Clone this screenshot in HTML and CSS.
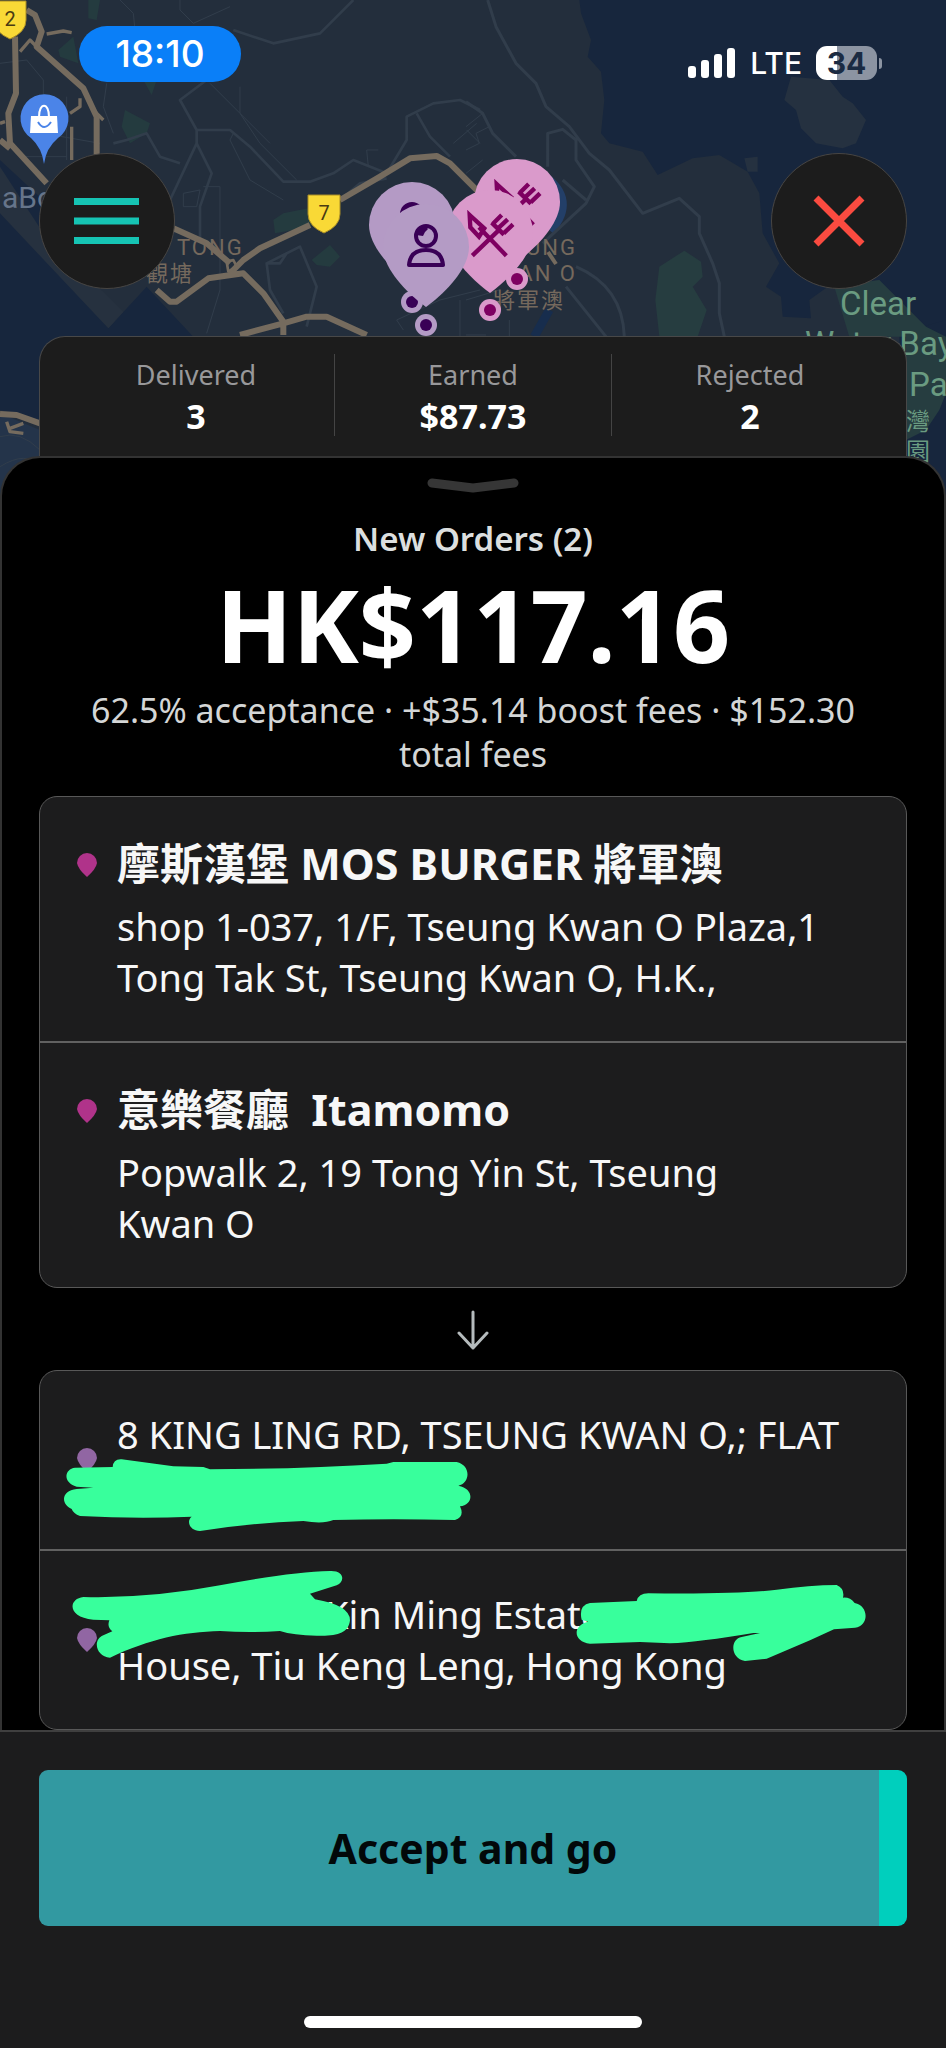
FILE: index.html
```html
<!DOCTYPE html>
<html lang="en">
<head>
<meta charset="utf-8">
<meta name="viewport" content="width=device-width, initial-scale=1">
<title>New Orders</title>
<link rel="stylesheet" href="styles.css">
</head>
<body>
<div class="screen">
  <svg class="map" viewBox="0 0 946 520" role="img" aria-label="Map">
    <rect width="946" height="520" fill="#232e3c"/>
    <!-- water -->
    <g transform="scale(.33333)" fill="#17263d">
      <path d="M0 480 140 610 205 840 325 985 440 860 580 1010V1240L120 1260 0 1230Z"/>
      <path d="M0 640 325 985 370 935 130 700 0 500Z" fill="#26313f"/>
      <path d="M0 1240 120 1290V1400L0 1560Z" fill="#24344a"/>
    </g>
    <g transform="translate(466 0) scale(.33333)">
      <path fill="#17263d" d="M340 0 345 40 375 120 365 170 405 215 415 300 405 400 430 430 530 455 575 525 680 475 760 465 845 515 880 580 890 700 940 790 900 860 945 890 950 950 1035 955 1030 900 1100 850 1240 840 1340 960 1440 1010V0Z"/>
      <path fill="#17263d" d="M1300 1000 1440 960V1560H1300Z"/>
      <path fill="#253140" d="M975 230 1090 240 1130 290 1160 310 1200 360 1170 430 1130 445 1050 430 1005 385 990 330 955 300Z M835 475 875 470V515H845Z"/>
      <path fill="#263d40" d="M580 800 655 752 705 785 710 830 680 860 722 930 695 1010H580L568 900Z M1105 860 1240 840 1380 980 1440 1010V1180L1420 1230 1380 1290 1320 1320V1010H1150Z"/>
      <path fill="none" stroke="#172d4d" stroke-width="26" d="M205 1010 250 930"/>
      <path fill="none" stroke="#233f68" stroke-width="34" d="M230 530Q330 600 250 690"/>
    </g>
    <!-- parks -->
    <g transform="scale(.33333)" fill="#243b3f">
      <path d="M265 0H300L290 60 265 55Z M175 150 220 110 235 190 180 170Z M375 330 450 370 440 400 390 430 365 380Z M430 240H470L455 285Z M850 640 925 625 935 680 825 700 820 660Z M935 780 990 735 1020 770 990 800 950 795Z"/>
    </g>
    <!-- minor roads -->
    <g transform="scale(.33333)" fill="none" stroke="#313d4b" stroke-width="8" stroke-linejoin="round">
      <path d="M700 90 820 130 960 100 1060 0M340 430 380 420 440 400 480 470 540 490M520 700 510 600 590 430V390L540 300 620 240M590 390 690 390 750 440 850 545 930 545 1000 520 1060 480 1160 520 1220 420V350L1300 310 1380 300 1440 330M1250 340 1290 410 1350 470M590 430 635 520 600 620V720M800 790 900 740 950 860 920 980M860 760 840 790 800 790 810 870 850 940M1160 535 1080 550 1020 600"/>
      <g stroke-width="3"><path d="M610 560H660V870L620 1000M320 250 310 320 340 400M0 190 80 180 130 240V400L300 430M60 470H200M360 0 400 40 410 140M540 0V30L580 70 690 20M630 250 720 340 810 430M720 260V340L780 430 890 540M700 400 690 420 750 540 850 600M1190 960 1210 990M1380 900V1010M1190 960 1320 900 1440 870M1360 430 1430 370M1105 500 1100 450 1135 450M190 620 160 640 200 700M1400 390 1440 430M200 290V480M0 1310Q60 1290 120 1350M0 1400Q80 1350 120 1400M550 580 600 570 590 620 550 620Z"/></g>
    </g>
    <g transform="translate(466 0) scale(.33333)" fill="none" stroke="#313d4b" stroke-width="9" stroke-linejoin="round">
      <path d="M65 0 90 80 150 190 210 250 240 320 310 380 370 460 430 510 530 640 640 595 700 650V700L740 790 760 850V940L775 1010M245 500V400L290 388 330 420 330 480 385 560 360 610 230 730M290 540 360 600M0 305 50 340 80 400 150 470M300 860 420 1010M330 800Q470 860 475 1010"/>
      <path stroke-width="3" d="M0 380 50 340M0 450 40 430 30 400 70 380M0 520 50 480M0 900 100 870M0 1005H60M130 960V1010"/>
    </g>
    <!-- highways -->
    <g transform="scale(.33333)" fill="none" stroke="#756b5e" stroke-width="18" stroke-linejoin="round">
      <path d="M45 110 48 280 25 340 30 430 140 550M0 420 30 445M80 30 105 45 125 95 110 140 250 265 290 350V470M520 685 620 730 690 790M470 870 510 905H530L625 835 730 820 790 880 850 965 850 1005M720 1005 850 970M690 820 730 780 780 745 930 675M1020 600 1140 530 1230 475 1310 468 1350 490 1440 580M850 970 920 950 980 950 1100 1005M0 1242 50 1245 120 1270"/>
      <path stroke-width="10" d="M140 102 190 93 215 98M60 155 90 120 130 160M210 340 240 320 240 295M215 380V480M280 330 310 360M20 1265 30 1295 70 1300M30 1285 70 1270M0 370 15 365"/>
      <path d="M680 785 700 780 710 800 685 815Z" stroke-width="8"/>
    </g>
    <path d="M548 252 556 264" stroke="#756b5e" stroke-width="4"/>
    <!-- place names -->
    <g class="places">
      <text x="2" y="208" font-size="30" fill="#66758a">aBo</text>
      <text x="177" y="255" font-size="22" letter-spacing="2">TONG</text>
      <text x="146" y="281" font-size="22" letter-spacing="2">觀塘</text>
      <text x="577" y="255" text-anchor="end" font-size="22" letter-spacing="2">TSEUNG</text>
      <text x="577" y="281" text-anchor="end" font-size="22" letter-spacing="2">KWAN O</text>
      <text x="493" y="308" font-size="22" letter-spacing="2">將軍澳</text>
      <g fill="#6a9b81" font-size="33">
        <text x="840" y="315">Clear</text>
        <text x="805" y="355">Water Bay</text>
        <text x="909" y="396">Park</text>
        <text x="906" y="430" text-anchor="start" font-size="24">灣</text>
        <text x="906" y="460" font-size="24">園</text>
      </g>
    </g>
    <!-- route shields -->
    <g stroke="#a98c26" stroke-width="1" fill="#f9d936">
      <path d="M-6 1H26V20Q26 32 10 39Q-6 32-6 20Z"/>
      <path d="M308 195H340V214Q340 226 324 233Q308 226 308 214Z"/>
    </g>
    <g class="shield-text"><text x="10" y="26">2</text><text x="324" y="220">7</text></g>
    <!-- shopping marker -->
    <path fill="#4b84e8" d="M44 164Q42 148 31 138A24 24 0 1 1 58 138Q46 148 44 164Z"/>
    <path fill="#fff" d="M31 116H57L58 133H30Z"/>
    <path fill="none" stroke="#fff" stroke-width="2" d="M39 117C39 102 49 102 49 117"/>
    <path fill="none" stroke="#4b84e8" stroke-width="2" d="M38 122Q44 132 51 122"/>
    <!-- order pins -->
    <defs>
      <path id="drop" d="M-43 0A43 43 0 0 1 43 0C43 22 19 46 0 60C-19 46-43 22-43 0Z"/>
      <g id="utensils" transform="translate(-151 -93) scale(.33333)" fill="none" stroke="#7e0061" stroke-width="13">
        <path d="M400 347 478 272M502 347 420 262M392 225 436 265 420 290 394 262ZM461 252 488 225M477 265 506 238M494 280 522 253M458 248 495 284"/>
      </g>
      <g id="person" fill="none" stroke="#390056" stroke-width="4">
        <circle cy="-11" r="10"/>
        <path stroke-linejoin="round" d="M-17 18C-16 7-9 3 0 3S16 7 17 18Z"/>
        <path fill="#390056" stroke="none" d="M-10-12-8-18 0-20 2-18-1-15-3-11Z"/>
      </g>
    </defs>
    <g transform="translate(517 202)" fill="#da9acb"><use href="#drop"/><use href="#utensils"/><circle cy="77" r="11"/><circle cy="77" r="6" fill="#7e0061"/></g>
    <g transform="translate(490 233)" fill="#da9acb"><use href="#drop"/><use href="#utensils"/><circle cy="77" r="11"/><circle cy="77" r="6" fill="#7e0061"/></g>
    <g transform="translate(412 225)" fill="#b49ac5"><use href="#drop"/><use href="#person"/><circle cy="77" r="11"/><circle cy="77" r="6" fill="#390056"/></g>
    <g transform="translate(426 247)" fill="#b49bc5"><use href="#drop"/><use href="#person"/><circle cy="78" r="11"/><circle cy="78" r="6" fill="#390056"/></g>
  </svg>

  <header class="top">
    <div class="status">
      <time class="clock">18:10</time>
      <div class="signals">
        <svg width="48" height="32" viewBox="0 0 48 32" fill="#fff" aria-hidden="true"><rect y="19" width="8" height="12" rx="3"/><rect x="13" y="13" width="8" height="18" rx="3"/><rect x="26" y="7" width="8" height="24" rx="3"/><rect x="39" y="1" width="8" height="30" rx="3"/></svg>
        <span>LTE</span>
        <span class="battery">34</span>
      </div>
    </div>
    <div class="controls">
      <button class="round" aria-label="Menu"><svg width="66" height="48" viewBox="0 0 66 48" fill="#16c4b4"><path d="M0 1H65V8H0ZM0 20.500H65V27.500H0ZM0 40H65V47H0Z"/></svg></button>
      <button class="round" aria-label="Close"><svg width="52" height="52" viewBox="0 0 52 52" stroke="#fa4b40" stroke-width="7"><path d="M3 3 49 49M49 3 3 49"/></svg></button>
    </div>
    <dl class="stats">
      <div><dt>Delivered</dt><dd>3</dd></div>
      <div><dt>Earned</dt><dd>$87.73</dd></div>
      <div><dt>Rejected</dt><dd>2</dd></div>
    </dl>
  </header>

  <main class="sheet">
    <svg class="handle" width="92" height="16" viewBox="0 0 92 16" fill="none" stroke="#363636" stroke-width="9" stroke-linecap="round" stroke-linejoin="round" aria-hidden="true"><path d="M5 5 46 10 87 5"/></svg>
    <h1>New Orders (2)</h1>
    <p class="amount">HK$117.16</p>
    <p class="fees">62.5% acceptance · +$35.14 boost fees · $152.30 total fees</p>

    <ul class="card">
      <li class="stop pickup">
        <svg class="pin" viewBox="0 0 20 24" fill="#b0338a"><path d="M0 10A10 10 0 0 1 20 10Q19 16 10 24Q1 16 0 10Z"/></svg>
        <div><h2>摩斯漢堡 MOS BURGER 將軍澳</h2><p>shop 1-037, 1/F, Tseung Kwan O Plaza,1 Tong Tak St, Tseung Kwan O, H.K.,</p></div>
      </li>
      <li class="stop pickup">
        <svg class="pin" viewBox="0 0 20 24" fill="#b0338a"><path d="M0 10A10 10 0 0 1 20 10Q19 16 10 24Q1 16 0 10Z"/></svg>
        <div><h2>意樂餐廳&nbsp; Itamomo</h2><p>Popwalk 2, 19 Tong Yin St, Tseung<br>Kwan O</p></div>
      </li>
    </ul>

    <svg class="arrow" width="32" height="40" viewBox="0 0 32 40" fill="none" stroke="#b5bbbd" stroke-width="3" stroke-linecap="round" stroke-linejoin="round" aria-hidden="true"><path d="M16 2V38M2 23 16 38 30 23"/></svg>

    <ul class="card">
      <li class="stop dropoff">
        <svg class="pin" viewBox="0 0 20 24" fill="#9166a3"><path d="M0 10A10 10 0 0 1 20 10Q19 16 10 24Q1 16 0 10Z"/></svg>
        <p>8 KING LING RD, TSEUNG KWAN O,; FLAT<br>&nbsp;</p>
        <svg class="scribble" viewBox="40 1374 866 179" aria-hidden="true"><path transform="translate(50 1440) scale(.33333)" d="M188 90Q190 65 215 67L370 88 460 90 480 97Q750 96 1010 80L1030 75H1220C1265 85 1260 140 1225 146C1275 155 1270 205 1230 208Q1245 240 1215 249 1030 244 850 249 820 262 760 252 600 258 450 282C415 280 410 250 425 239Q260 246 90 237 70 230 65 216C30 200 35 160 80 156L130 152 80 149C35 135 45 95 75 92Z"/></svg>
      </li>
      <li class="stop dropoff">
        <svg class="pin" viewBox="0 0 20 24" fill="#9166a3"><path d="M0 10A10 10 0 0 1 20 10Q19 16 10 24Q1 16 0 10Z"/></svg>
        <p><span class="redacted">Kin Ming Estate</span><br>House, Tiu Keng Leng, Hong Kong</p>
        <svg class="scribble" viewBox="40 1554 866 179" aria-hidden="true"><path transform="translate(50 1440) scale(.33333)" d="M100 480Q300 485 510 445T840 402C885 400 885 435 860 445L780 470 795 487Q900 505 900 550C895 590 860 598 800 596Q730 595 690 582 600 588 510 582C400 585 300 605 180 662C140 660 125 610 160 595L187 583Q170 570 178 550L130 548C50 540 55 485 100 480Z"/><path transform="translate(560 1570) scale(.33333)" d="M90 108 230 102Q235 80 265 79 550 82 650 68T830 54Q855 65 849 92 870 90 884 108C925 115 930 175 885 182L822 187 750 220 620 275 555 282C510 275 510 215 545 210L600 198 580 198Q420 225 330 229L240 225 90 230C40 225 35 175 85 164L65 158Q55 115 90 108Z"/></svg>
      </li>
    </ul>
  </main>

  <footer class="bottom">
    <button class="accept">Accept and go</button>
    <div class="home"></div>
  </footer>
</div>
</body>
</html>
```
FILE: styles.css
```css
* { box-sizing: border-box; }

body {
  margin: 0;
  background: #1c1c1d;
  color: #f7f7f7;
  font-family: "Noto Sans", "Noto Sans CJK TC", sans-serif;
}

h1, h2, p, dl, dd, ul { margin: 0; padding: 0; }
ul { list-style: none; }
button { border: 0; padding: 0; font: inherit; cursor: pointer; }

.screen {
  position: relative;
  display: flex;
  flex-direction: column;
  min-height: 100vh;
  overflow: hidden;
}

.map {
  position: absolute;
  top: 0;
  left: 0;
  width: 100%;
}

.places { fill: #75695d; font-family: Roboto, "Noto Sans CJK TC", sans-serif; }
.shield-text { fill: #4a3b12; font: 20px Roboto, sans-serif; text-anchor: middle; }

.top { position: relative; padding: 26px 39px 0; }

.status {
  display: flex;
  justify-content: space-between;
  align-items: flex-start;
  padding: 0 30px 0 40px;
  font-family: Inter, sans-serif;
}

.clock {
  width: 162px;
  border-radius: 28px;
  background: #0a7ff8;
  color: #fff;
  font-size: 37px;
  font-weight: 500;
  line-height: 56px;
  text-align: center;
}

.signals {
  display: flex;
  align-items: center;
  gap: 14px;
  padding-top: 18px;
  color: #fff;
  font-size: 30px;
  font-weight: 500;
  line-height: 38px;
}

.battery {
  position: relative;
  width: 61px;
  border-radius: 11px;
  background: linear-gradient(90deg, #fff 35%, #8c94a2 35%);
  color: #1b2b42;
  font-size: 30px;
  font-weight: 700;
  line-height: 34px;
  text-align: center;
}

.battery::after {
  content: "";
  position: absolute;
  right: -5px;
  top: 12px;
  width: 3px;
  height: 11px;
  border-radius: 0 3px 3px 0;
  background: #8c94a2;
}

.controls { display: flex; justify-content: space-between; margin-top: 71px; }

.round {
  display: grid;
  place-items: center;
  width: 136px;
  height: 136px;
  border: 1px solid #474543;
  border-radius: 50%;
  background: #1c1c1c;
}

.stats {
  display: flex;
  margin-top: 47px;
  padding: 17px 18px 20px;
  border: 1px solid #484848;
  border-bottom: 0;
  border-radius: 26px 26px 0 0;
  background: #1c1c1c;
  text-align: center;
}

.stats div { flex: 1; }
.stats div + div { border-left: 1px solid #444; }
.stats dt { color: #98989a; font-size: 27px; line-height: 42px; }
.stats dd { color: #fff; font-size: 34px; font-weight: 700; line-height: 40px; }

.sheet {
  position: relative;
  display: flex;
  flex-direction: column;
  align-items: center;
  padding: 20px 37px 0;
  border: 2px solid #333;
  border-bottom: 0;
  border-radius: 40px 40px 0 0;
  background: #000;
}

h1 { margin-top: 23px; color: #dcdfdf; font-size: 33px; font-weight: 600; line-height: 44px; }
.amount { margin-top: 9px; color: #fff; font-size: 100px; font-weight: 700; line-height: 108px; }
.fees { max-width: 800px; margin-top: 10px; color: #d4d6d6; font-size: 34px; line-height: 44px; text-align: center; }

.card {
  width: 100%;
  margin-top: 20px;
  border: 1px solid #585858;
  border-radius: 18px;
  background: #1c1c1d;
}

.stop { position: relative; display: flex; gap: 20px; padding: 38px 24px 38px 37px; }
.stop + .stop { border-top: 2px solid #616161; }
.pin { flex: none; width: 20px; height: 24px; }
.pickup .pin { margin-top: 18px; }
.dropoff .pin { align-self: center; }
.stop h2 { margin-bottom: 8px; font-size: 43px; font-weight: 700; line-height: 58px; }
.stop p { font-size: 38px; line-height: 51px; }
.redacted { margin-left: 208px; }

.scribble {
  position: absolute;
  top: 0;
  left: 0;
  width: 100%;
  fill: #38ff9c;
}

.arrow { margin: 22px 0 0; }

.bottom {
  position: relative;
  display: flex;
  flex: 1;
  flex-direction: column;
  align-items: center;
  padding: 38px 39px 20px;
  border-top: 2px solid #3f3f3f;
  background: #1c1c1d;
}

.accept {
  width: 100%;
  height: 156px;
  border-radius: 9px;
  background: linear-gradient(90deg, #3299a1 calc(100% - 28px), #00cfbd calc(100% - 28px));
  color: #020809;
  font-size: 41px;
  font-weight: 700;
}

.home { width: 338px; height: 12px; margin-top: auto; border-radius: 6px; background: #fff; }
```
